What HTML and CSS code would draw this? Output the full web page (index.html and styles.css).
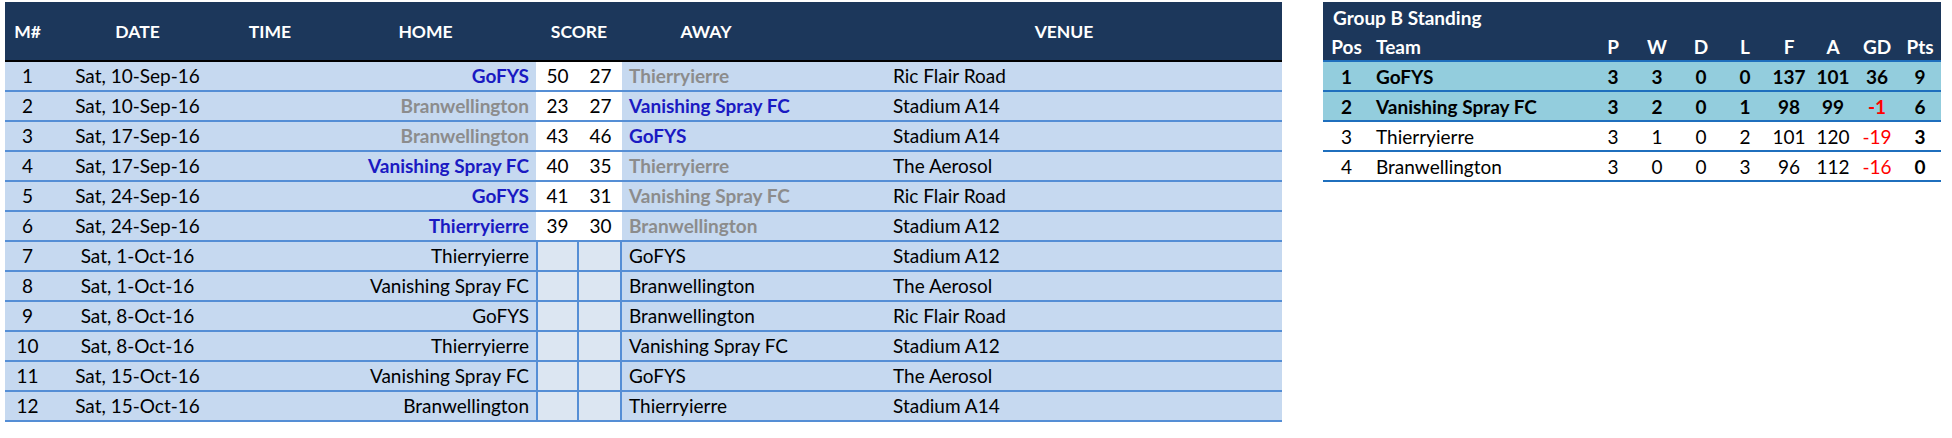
FILE: index.html
```html
<!DOCTYPE html>
<html>
<head>
<meta charset="utf-8">
<link rel="stylesheet" href="styles.css">
</head>
<body>
<div class="page">
  <table class="fixtures">
    <colgroup>
      <col class="c-num"><col class="c-date"><col class="c-time"><col class="c-home">
      <col class="c-score"><col class="c-score"><col class="c-away"><col class="c-gap">
      <col class="c-venue"><col class="c-end">
    </colgroup>
    <thead>
      <tr>
        <th>M#</th><th>DATE</th><th>TIME</th><th>HOME</th>
        <th colspan="2">SCORE</th><th>AWAY</th><th></th><th>VENUE</th><th></th>
      </tr>
    </thead>
    <tbody>
      <tr><td class="num">1</td><td class="date">Sat, 10-Sep-16</td><td></td><td class="home win">GoFYS</td><td class="sc done">50</td><td class="sc done">27</td><td class="away lose">Thierryierre</td><td></td><td class="venue">Ric Flair Road</td><td></td></tr>
      <tr><td class="num">2</td><td class="date">Sat, 10-Sep-16</td><td></td><td class="home lose">Branwellington</td><td class="sc done">23</td><td class="sc done">27</td><td class="away win">Vanishing Spray FC</td><td></td><td class="venue">Stadium A14</td><td></td></tr>
      <tr><td class="num">3</td><td class="date">Sat, 17-Sep-16</td><td></td><td class="home lose">Branwellington</td><td class="sc done">43</td><td class="sc done">46</td><td class="away win">GoFYS</td><td></td><td class="venue">Stadium A14</td><td></td></tr>
      <tr><td class="num">4</td><td class="date">Sat, 17-Sep-16</td><td></td><td class="home win">Vanishing Spray FC</td><td class="sc done">40</td><td class="sc done">35</td><td class="away lose">Thierryierre</td><td></td><td class="venue">The Aerosol</td><td></td></tr>
      <tr><td class="num">5</td><td class="date">Sat, 24-Sep-16</td><td></td><td class="home win">GoFYS</td><td class="sc done">41</td><td class="sc done">31</td><td class="away lose">Vanishing Spray FC</td><td></td><td class="venue">Ric Flair Road</td><td></td></tr>
      <tr><td class="num">6</td><td class="date">Sat, 24-Sep-16</td><td></td><td class="home win">Thierryierre</td><td class="sc done">39</td><td class="sc done">30</td><td class="away lose">Branwellington</td><td></td><td class="venue">Stadium A12</td><td></td></tr>
      <tr><td class="num">7</td><td class="date">Sat, 1-Oct-16</td><td></td><td class="home">Thierryierre</td><td class="sc open first"></td><td class="sc open"></td><td class="away">GoFYS</td><td></td><td class="venue">Stadium A12</td><td></td></tr>
      <tr><td class="num">8</td><td class="date">Sat, 1-Oct-16</td><td></td><td class="home">Vanishing Spray FC</td><td class="sc open first"></td><td class="sc open"></td><td class="away">Branwellington</td><td></td><td class="venue">The Aerosol</td><td></td></tr>
      <tr><td class="num">9</td><td class="date">Sat, 8-Oct-16</td><td></td><td class="home">GoFYS</td><td class="sc open first"></td><td class="sc open"></td><td class="away">Branwellington</td><td></td><td class="venue">Ric Flair Road</td><td></td></tr>
      <tr><td class="num">10</td><td class="date">Sat, 8-Oct-16</td><td></td><td class="home">Thierryierre</td><td class="sc open first"></td><td class="sc open"></td><td class="away">Vanishing Spray FC</td><td></td><td class="venue">Stadium A12</td><td></td></tr>
      <tr><td class="num">11</td><td class="date">Sat, 15-Oct-16</td><td></td><td class="home">Vanishing Spray FC</td><td class="sc open first"></td><td class="sc open"></td><td class="away">GoFYS</td><td></td><td class="venue">The Aerosol</td><td></td></tr>
      <tr><td class="num">12</td><td class="date">Sat, 15-Oct-16</td><td></td><td class="home">Branwellington</td><td class="sc open first"></td><td class="sc open"></td><td class="away">Thierryierre</td><td></td><td class="venue">Stadium A14</td><td></td></tr>
    </tbody>
  </table>

  <table class="standing">
    <colgroup>
      <col class="s-pos"><col class="s-team">
      <col class="s-n"><col class="s-n"><col class="s-n"><col class="s-n">
      <col class="s-n"><col class="s-n"><col class="s-n"><col class="s-pts">
    </colgroup>
    <thead>
      <tr class="title"><th colspan="10">Group B Standing</th></tr>
      <tr class="cols">
        <th>Pos</th><th class="team">Team</th><th>P</th><th>W</th><th>D</th><th>L</th><th>F</th><th>A</th><th>GD</th><th>Pts</th>
      </tr>
    </thead>
    <tbody>
      <tr class="qual"><td>1</td><td class="team">GoFYS</td><td>3</td><td>3</td><td>0</td><td>0</td><td>137</td><td>101</td><td>36</td><td>9</td></tr>
      <tr class="qual"><td>2</td><td class="team">Vanishing Spray FC</td><td>3</td><td>2</td><td>0</td><td>1</td><td>98</td><td>99</td><td class="neg">-1</td><td>6</td></tr>
      <tr><td>3</td><td class="team">Thierryierre</td><td>3</td><td>1</td><td>0</td><td>2</td><td>101</td><td>120</td><td class="neg">-19</td><td class="pts">3</td></tr>
      <tr><td>4</td><td class="team">Branwellington</td><td>3</td><td>0</td><td>0</td><td>3</td><td>96</td><td>112</td><td class="neg">-16</td><td class="pts">0</td></tr>
    </tbody>
  </table>
</div>
</body>
</html>
```

FILE: styles.css
```css
html, body {
  margin: 0;
  padding: 0;
  background: #ffffff;
}

body {
  font-family: Lato, "Liberation Sans", sans-serif;
  font-size: 19px;
  color: #000000;
}

.page {
  display: flex;
  align-items: flex-start;
  gap: 41px;
  padding: 2px 0 0 5px;
}

table {
  border-collapse: separate;
  border-spacing: 0;
  table-layout: fixed;
}

th, td {
  padding: 0;
  white-space: nowrap;
  overflow: visible;
  box-sizing: border-box;
}

/* ---------- Fixtures table ---------- */
.fixtures {
  width: 1277px;
}

.c-num { width: 45px; }
.c-date { width: 175px; }
.c-time { width: 90px; }
.c-home { width: 221px; }
.c-score { width: 43px; }
.c-away { width: 168px; }
.c-gap { width: 97px; }
.c-venue { width: 354px; }
.c-end { width: 41px; }

.fixtures th {
  background: #1c375b;
  color: #ffffff;
  font-weight: 700;
  font-size: 17.5px;
  height: 60px;
  text-align: center;
  border-bottom: 2px solid #000000;
  padding-top: 1px;
}

.fixtures td {
  background: #c6d9f0;
  height: 30px;
  border-bottom: 2px solid #558ed5;
  vertical-align: middle;
  line-height: 20px;
}

.fixtures td.num { text-align: center; padding-right: 0; }
.fixtures td.date { text-align: center; }
.fixtures td.home { text-align: right; padding-right: 7px; }
.fixtures td.away { padding-left: 7px; }
.fixtures td.venue { padding-left: 6px; }

.fixtures td.sc { text-align: center; }
.fixtures td.sc.done { background: #ffffff; }
.fixtures td.sc.open {
  background: #dce6f2;
  border-right: 2px solid #558ed5;
}
.fixtures td.sc.open.first { border-left: 2px solid #558ed5; }

.win { color: #1a1ac2; font-weight: 700; }
.lose { color: #8c8c8c; font-weight: 700; }

/* ---------- Standing table ---------- */
.standing {
  width: 618px;
}

.s-pos { width: 47px; }
.s-team { width: 221px; }
.s-n { width: 44px; }
.s-pts { width: 42px; }

.standing th {
  background: #1c375b;
  color: #ffffff;
  font-weight: 700;
  text-align: center;
  height: 30px;
}

.standing .title th {
  text-align: left;
  padding-left: 10px;
  padding-top: 1px;
}

.standing .cols th {
  border-bottom: 2px solid #1f6fbd;
  font-size: 19px;
}

.standing th.team,
.standing td.team {
  text-align: left;
  padding-left: 6px;
}

.standing td {
  height: 30px;
  text-align: center;
  border-bottom: 2px solid #1f6fbd;
  background: #ffffff;
}

.standing tr.qual td {
  background: #93cddd;
  font-weight: 700;
}

.standing td.neg { color: #ff0000; }
.standing td.pts { font-weight: 700; }
```
